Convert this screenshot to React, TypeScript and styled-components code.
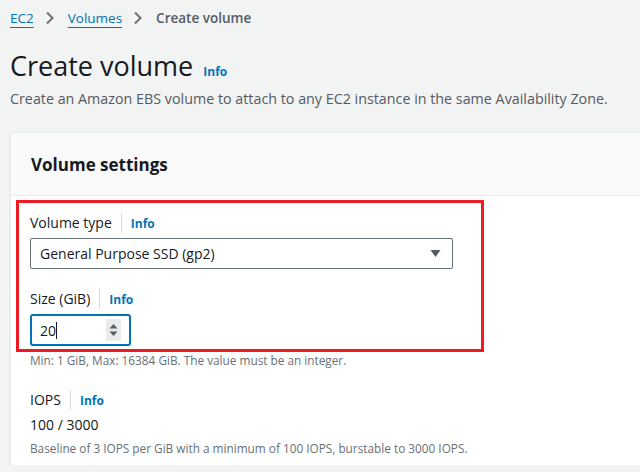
import React from 'react';
import styled, { createGlobalStyle } from 'styled-components';

const GlobalStyle = createGlobalStyle`
  html, body {
    margin: 0;
    padding: 0;
    background: #f2f3f3;
    font-family: "Open Sans", "Noto Sans", Arial, sans-serif;
    color: #16191f;
    overflow: hidden;
  }
`;

const Chevron: React.FC = () => (
  <svg width="10" height="14" viewBox="0 0 10 14">
    <path d="M2 1.5 L7.5 7 L2 12.5" fill="none" stroke="#687078" strokeWidth="2" />
  </svg>
);

const Caret: React.FC = () => (
  <svg width="11" height="9" viewBox="0 0 11 9">
    <path d="M0.5 1 H10.5 L5.5 8 Z" fill="#545b64" />
  </svg>
);

const Spinner: React.FC = () => (
  <SpinS>
    <svg width="9" height="16" viewBox="0 0 9 16">
      <path d="M0.5 6.5 L4.5 2 L8.5 6.5 Z" fill="#545b64" />
      <path d="M0.5 9.5 L4.5 14 L8.5 9.5 Z" fill="#545b64" />
    </svg>
  </SpinS>
);

const Field: React.FC<{ label: string; children: React.ReactNode }> = ({ label, children }) => (
  <FieldS>
    <LabelRowS>
      <LabelS>{label}</LabelS>
      <InfoS>Info</InfoS>
    </LabelRowS>
    {children}
  </FieldS>
);

export default function App() {
  return (
    <PageS>
      <GlobalStyle />
      <CrumbsS>
        <CrumbLinkS>EC2</CrumbLinkS>
        <Chevron />
        <CrumbLinkS>Volumes</CrumbLinkS>
        <Chevron />
        <CrumbCurrentS>Create volume</CrumbCurrentS>
      </CrumbsS>

      <TitleRowS>
        <TitleS>Create volume</TitleS>
        <TitleInfoS>Info</TitleInfoS>
      </TitleRowS>
      <DescS>Create an Amazon EBS volume to attach to any EC2 instance in the same Availability Zone.</DescS>

      <CardS>
        <CardHeaderS>
          <CardTitleS>Volume settings</CardTitleS>
        </CardHeaderS>
        <CardBodyS>
          <HighlightS>
            <Field label="Volume type">
              <SelectS>
                <span>General Purpose SSD (gp2)</span>
                <Caret />
              </SelectS>
            </Field>
            <Field label="Size (GiB)">
              <NumberS>
                <NumValueS>
                  20<CursorS />
                </NumValueS>
                <Spinner />
              </NumberS>
            </Field>
          </HighlightS>
          <HintS>Min: 1 GiB, Max: 16384 GiB. The value must be an integer.</HintS>

          <IopsS>
            <LabelRowS>
              <LabelS>IOPS</LabelS>
              <InfoS>Info</InfoS>
            </LabelRowS>
            <ValueS>100 / 3000</ValueS>
            <HintS $gap={4}>Baseline of 3 IOPS per GiB with a minimum of 100 IOPS, burstable to 3000 IOPS.</HintS>
          </IopsS>
        </CardBodyS>
      </CardS>
    </PageS>
  );
}

const PageS = styled.div`
  padding: 7px 0 0 10px;
  height: 465px;
  box-sizing: border-box;
`;

const CrumbsS = styled.div`
  display: flex;
  align-items: center;
  gap: 11px;
  height: 22px;
  font-size: 13.5px;
`;

const CrumbLinkS = styled.a`
  color: #0073bb;
  text-decoration: underline;
  text-underline-offset: 4px;
  text-decoration-thickness: 1px;

  & + svg {
    margin-right: 2px;
  }
`;

const CrumbCurrentS = styled.span`
  color: #545b64;
  font-weight: 600;
`;

const TitleRowS = styled.div`
  display: flex;
  align-items: baseline;
  gap: 10px;
  margin-top: 20px;
`;

const TitleS = styled.h1`
  margin: 0;
  font-size: 27px;
  font-weight: 400;
  line-height: 34px;
  color: #16191f;
`;

const TitleInfoS = styled.a`
  color: #0073bb;
  font-size: 12px;
  font-weight: 700;
`;

const DescS = styled.p`
  margin: 6px 0 0;
  font-size: 14.3px;
  line-height: 20px;
  color: #545b64;
`;

const CardS = styled.section`
  margin-top: 23px;
  background: #fff;
  border-top: 1px solid #eaeded;
  border-left: 1px solid #eaeded;
  box-shadow: 0 1px 1px 0 rgba(0, 28, 36, 0.2);
`;

const CardHeaderS = styled.header`
  background: #fafafa;
  border-bottom: 1px solid #eaeded;
  height: 62px;
  display: flex;
  align-items: center;
  padding-left: 20px;
`;

const CardTitleS = styled.h2`
  margin: 0;
  font-size: 17px;
  font-weight: 700;
  color: #16191f;
`;

const CardBodyS = styled.div`
  padding: 4px 20px 20px 19px;
`;

const HighlightS = styled.div`
  margin-left: -14px;
  width: 468px;
  box-sizing: border-box;
  border: 3px solid #ed1c24;
  padding: 10px 11px 3px 11px;
`;

const FieldS = styled.div`
  & + & {
    margin-top: 20px;
  }
`;

const LabelRowS = styled.div`
  display: flex;
  align-items: center;
  height: 20px;
  font-size: 14px;
`;

const LabelS = styled.span`
  color: #16191f;
  padding-right: 9px;
  border-right: 1px solid #d5dbdb;
  line-height: 20px;
`;

const InfoS = styled.a`
  color: #0073bb;
  font-weight: 700;
  font-size: 12px;
  padding-left: 9px;
`;

const SelectS = styled.div`
  margin-top: 5px;
  width: 423px;
  height: 31px;
  box-sizing: border-box;
  border: 1px solid #687078;
  border-radius: 2px;
  display: flex;
  align-items: center;
  justify-content: space-between;
  padding: 0 11px 0 9px;
  font-size: 14px;
  color: #16191f;
`;

const NumberS = styled.div`
  margin-top: 5px;
  width: 101px;
  height: 32px;
  box-sizing: border-box;
  border: 2px solid #0073bb;
  border-radius: 3px;
  display: flex;
  align-items: center;
  justify-content: space-between;
  padding: 0 8px 0 8px;
  font-size: 14px;
`;

const NumValueS = styled.span`
  display: flex;
  align-items: center;
`;

const CursorS = styled.span`
  display: inline-block;
  width: 1px;
  height: 17px;
  background: #16191f;
`;

const SpinS = styled.span`
  display: flex;
  align-items: center;
  justify-content: center;
  width: 15px;
  height: 22px;
  background: #e9ebed;
`;

const HintS = styled.div<{ $gap?: number }>`
  margin-top: ${(p) => p.$gap ?? 0}px;
  font-size: 11.8px;
  line-height: 16px;
  color: #687078;
`;

const IopsS = styled.div`
  margin-top: 22px;
`;

const ValueS = styled.div`
  font-size: 14px;
  line-height: 22px;
  color: #16191f;
  margin-top: 4px;
`;
